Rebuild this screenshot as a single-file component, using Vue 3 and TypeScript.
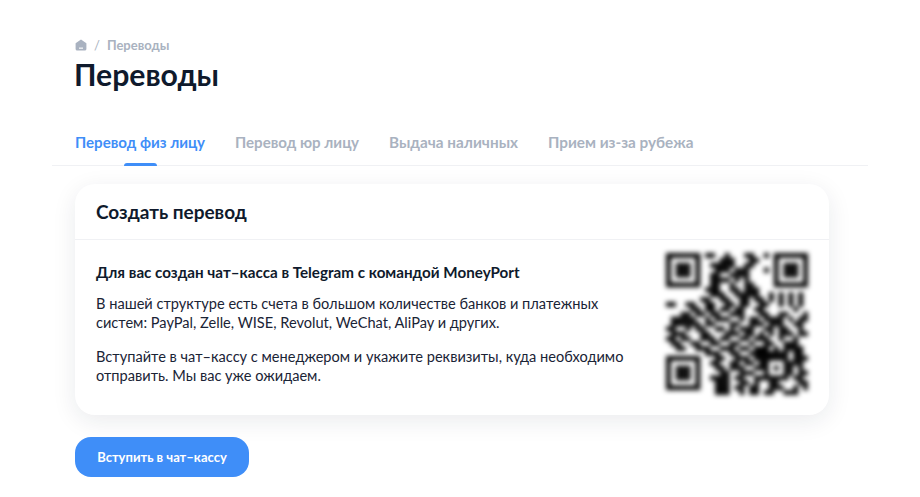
<script setup lang="ts">
const tabs = ['Перевод физ лицу', 'Перевод юр лицу', 'Выдача наличных', 'Прием из-за рубежа']
const rows = [
  '1111111 011001000110010 1111111',
  '1000001 000011100011000 1000001',
  '1011101 001111100110000 1011101',
  '1011101 000111011100010 1011101',
  '1011101 001100111100000 1011101',
  '1000001 001111010100000 1000001',
  '1111111 001100100110000 1111111',
  '00000000111001101110000000000',
  '00000000011100111110010101010',
  '00000001100110011011010101010',
  '11001100110011011001100101010',
  '00000110110110110011000000100',
  '00011011011001110001100110001',
  '01111100101110010110111101011',
  '01111110110001100111011100110',
  '11001011001101011100110110010',
  '01110001100011101101010111011',
  '11011001110110011011100100100',
  '01100110011001100100110011100',
  '00110011100111011011101011110',
  '00000000111001100111111110110',
  '11111110 001100111011 11111 0111',
  '10000010 011001101101 10001 1110',
  '10111010 001101110011 10101 1010',
  '10111010 000110011100 10001 1011',
  '10111010 011110110011 11111 0110',
  '10000010 001110011010 01100 0011',
  '11111110 001110110110 01110 0101',
  '00000000 001110010110 11001 1100',
]
const cells = rows.flatMap((r, y) =>
  r.replace(/ /g, '').split('').flatMap((c, x) => (c === '1' ? [{ x, y }] : [])),
)
</script>

<template>
  <div class="page">
    <div class="head">
      <nav class="crumbs">
        <svg class="home" width="12" height="12" viewBox="0 0 12 12">
          <path d="M6 .6 11.4 4.2V10a1.6 1.6 0 0 1-1.6 1.6H2.2A1.6 1.6 0 0 1 .6 10V4.2Z" fill="#a9b2c0" />
          <rect x="4" y="8.6" width="4" height="1.1" fill="#fff" />
        </svg>
        <span class="sep">/</span>
        <span>Переводы</span>
      </nav>
      <h1>Переводы</h1>
    </div>
    <div class="tabs">
      <div v-for="(t, i) in tabs" :key="t" class="tab" :class="{ active: i === 0 }">{{ t }}</div>
    </div>
    <div class="main">
      <section class="card">
        <h2>Создать перевод</h2>
        <div class="body">
          <div class="text">
            <h3>Для вас создан чат–касса в Telegram с командой MoneyPort</h3>
            <p>В нашей структуре есть счета в большом количестве банков и платежных систем: PayPal, Zelle, WISE, Revolut, WeChat, AliPay и других.</p>
            <p>Вступайте в чат–кассу с менеджером и укажите реквизиты, куда необходимо отправить. Мы вас уже ожидаем.</p>
          </div>
          <svg class="qr" width="142" height="142" viewBox="0 0 29 29">
            <rect v-for="c in cells" :key="c.x + '-' + c.y" :x="c.x" :y="c.y" width="1.02" height="1.02" fill="#000" />
          </svg>
        </div>
      </section>
      <button class="btn">Вступить в чат–кассу</button>
    </div>
  </div>
</template>

<style>
body { background: #fff; }
</style>

<style scoped>
.page {
  width: 920px;
  height: 497px;
  overflow: hidden;
  padding: 37px 52px 0;
  box-sizing: border-box;
  font-family: Lato, 'Noto Sans', sans-serif;
  color: #0f1a2c;
}
.head { padding-left: 23px; }
.crumbs {
  display: flex;
  align-items: center;
  gap: 7px;
  height: 16px;
  font-size: 13px;
  font-weight: 700;
  color: #a9b2c0;
}
.home { display: block; }
.sep { font-weight: 400; }
h1 {
  margin: 4px 0 0;
  margin-left: -1px;
  font-size: 30.2px;
  line-height: 35px;
  font-weight: 700;
}
.tabs {
  display: flex;
  gap: 30px;
  margin-top: 37px;
  padding-left: 23px;
  height: 36px;
  border-bottom: 1px solid #f0f1f4;
}
.tab {
  position: relative;
  font-size: 15.1px;
  line-height: 22px;
  padding-top: 2px;
  font-weight: 700;
  color: #a9b2c0;
}
.tab:nth-child(3),
.tab:nth-child(4) { font-size: 15.3px; }
.tab.active { color: #3f8ef8; }
.tab.active::after {
  content: '';
  position: absolute;
  left: 50%;
  bottom: -1px;
  width: 33px;
  height: 3px;
  margin-left: -16px;
  background: #3f8ef8;
  border-radius: 3px 3px 0 0;
}
.main { padding: 18px 39px 0 23px; }
.card {
  background: #fff;
  border-radius: 20px;
  box-shadow: 0 6px 24px rgba(20, 30, 50, 0.09);
  height: 231px;
}
h2 {
  margin: 0;
  height: 55px;
  padding: 0 21px;
  font-size: 19px;
  line-height: 56px;
  font-weight: 700;
  border-bottom: 1px solid #f0f1f4;
}
.body {
  display: flex;
  justify-content: space-between;
  padding: 13px 21px 0 21px;
}
.text { width: 540px; padding-top: 9px; }
h3 {
  margin: 0 0 12px;
  font-size: 15.2px;
  line-height: 20px;
  font-weight: 700;
}
p {
  margin: 0 0 15px;
  font-size: 14.6px;
  line-height: 19px;
  color: #1a2436;
}
.qr {
  display: block;
  filter: blur(2.5px);
}
.btn {
  display: block;
  margin-top: 22px;
  width: 174px;
  height: 40px;
  border: 0;
  border-radius: 16px;
  background: #3f8ef8;
  color: #fff;
  font-family: inherit;
  font-size: 13px;
  font-weight: 700;
}
</style>
